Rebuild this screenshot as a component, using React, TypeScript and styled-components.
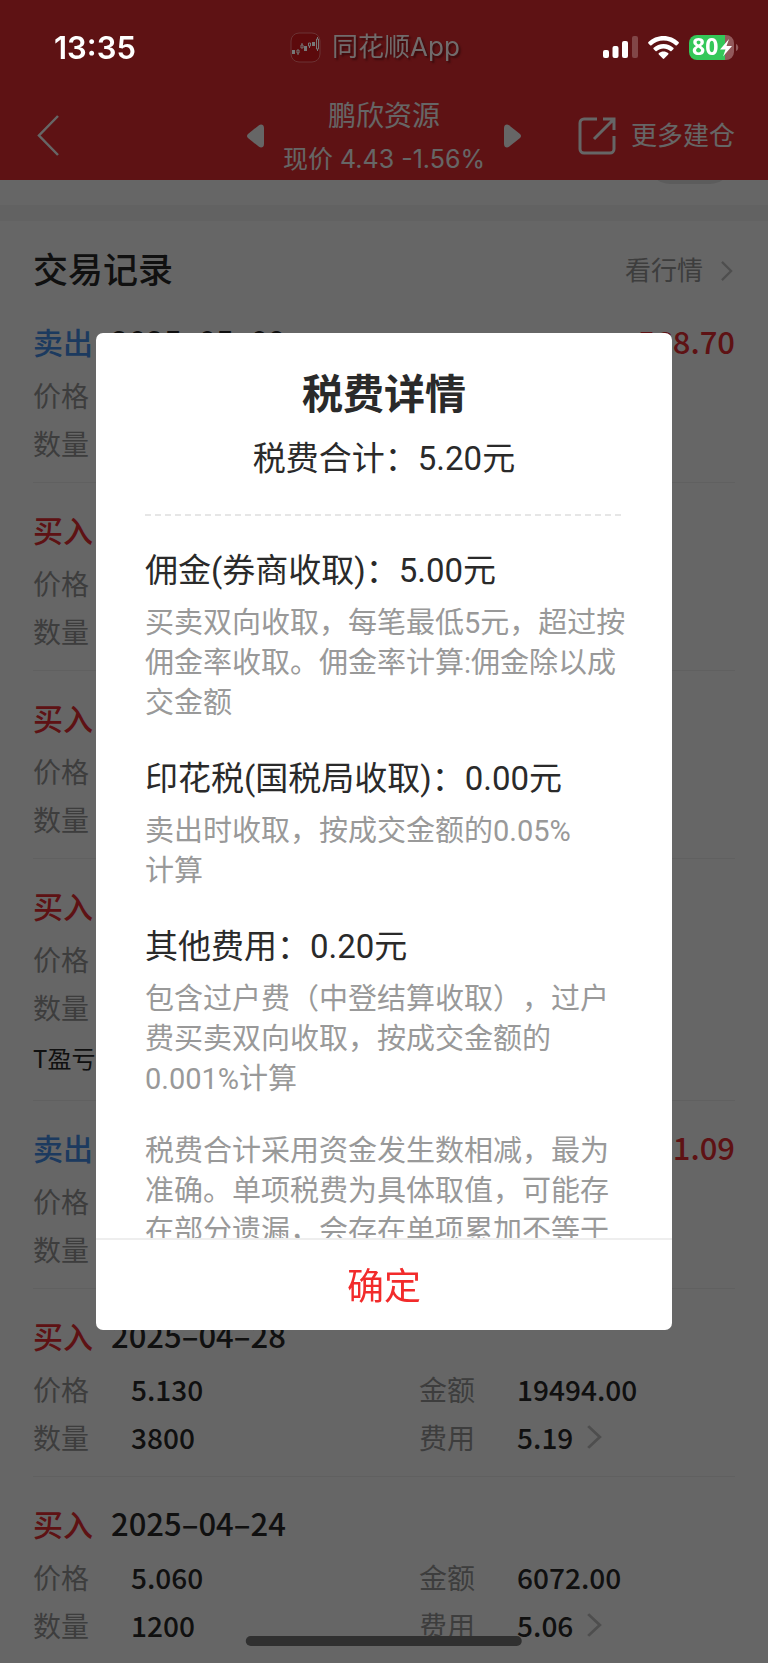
import React from 'react';
import styled, { createGlobalStyle } from 'styled-components';

const cjk = '"Noto Sans CJK SC", sans-serif';
const ink = '#2a2a2a';
const red = '#eb2d32';

const GlobalStyle = createGlobalStyle`
  * { box-sizing: border-box; }
  body {
    margin: 0;
    font-family: Inter, ${cjk};
    color: ${ink};
    text-spacing-trim: space-all;
  }
  h1, h2, h3, p, ul, dl, dd { margin: 0; padding: 0; font-weight: 400; }
  button { font: inherit; color: inherit; background: none; border: 0; padding: 0; }
  svg { display: block; flex: none; overflow: visible; }
`;

const Screen = styled.div`
  height: 100vh;
  display: flex;
  flex-direction: column;
  overflow: hidden;
  background: #fff;
`;

const Header = styled.header`
  flex: none;
  height: 180px;
  padding: 92px 33px 0;
  background: ${red};
  color: #fff;
  display: grid;
  grid-template-columns: 1fr 274px 1fr;
  align-items: center;
`;

const BackButton = styled.button`
  justify-self: start;
  padding-left: 4px;
`;

const StockSwitcher = styled.div`
  display: flex;
  align-items: center;
  justify-content: space-between;
`;

const Stock = styled.div`
  text-align: center;
  white-space: nowrap;
`;

const StockName = styled.h1`
  font-size: 28px;
  line-height: 46px;
`;

const StockPrice = styled.p`
  font-size: 25px;
  line-height: 40px;
`;

const MoreButton = styled.button`
  justify-self: end;
  display: flex;
  align-items: center;
  gap: 15px;
  font-size: 26px;
  line-height: 40px;
  white-space: nowrap;
`;

const Scroller = styled.main`
  flex: 1;
  min-height: 0;
  overflow: hidden;
`;

const PreviousPanel = styled.div`
  height: 25px;
  padding: 0 36px;
  overflow: hidden;
  display: flex;
  justify-content: flex-end;
`;

const PillButton = styled.button`
  width: 84px;
  height: 44px;
  margin-top: -40px;
  border-radius: 22px;
  background: #e6e6e6;
`;

const Divider = styled.div`
  height: 16px;
  background: #f5f5f5;
`;

const SectionHead = styled.div`
  display: flex;
  justify-content: space-between;
  align-items: center;
  padding: 25px 33px 0;
  line-height: 49px;
`;

const SectionTitle = styled.h2`
  font-size: 35px;
  font-weight: 500;
`;

const QuoteLink = styled.a`
  display: flex;
  align-items: center;
  gap: 18px;
  padding-right: 3px;
  font-size: 26px;
  color: #999;
  text-decoration: none;
`;

const RecordList = styled.ul`
  list-style: none;
  padding: 0 33px;
  font-family: ${cjk};
`;

const Record = styled.li`
  padding: 24px 0 15px;
  border-bottom: 1px solid #f0f0f0;
`;

const RecordHead = styled.div`
  display: flex;
  align-items: center;
  gap: 18px;
  margin-bottom: 8px;
  font-size: 31px;
  font-weight: 500;
  line-height: 44px;
`;

const Side = styled.span<{ $sell?: boolean }>`
  font-size: 30px;
  color: ${p => (p.$sell ? '#4691ee' : red)};
`;

const Profit = styled.span`
  margin-left: auto;
  color: ${red};
`;

const Fields = styled.dl`
  display: grid;
  grid-template-columns: 55% 45%;
`;

const Field = styled.div`
  display: grid;
  grid-template-columns: 98px 1fr;
  align-items: center;
  line-height: 48px;
  font-size: 28px;

  dt { color: #999; }
  dd {
    display: flex;
    align-items: center;
    gap: 14px;
    font-weight: 500;
  }
`;

const DayProfit = styled.p`
  font-size: 24px;
  line-height: 54px;
`;

const Overlay = styled.div`
  position: fixed;
  inset: 0;
  display: flex;
  align-items: center;
  justify-content: center;
  background: rgba(0, 0, 0, 0.6);
`;

const Dialog = styled.section`
  width: 75%;
  height: 60%;
  display: flex;
  flex-direction: column;
  border-radius: 7px;
  background: #fff;
  font-family: Roboto, ${cjk};
  overflow: hidden;
`;

const DialogBody = styled.div`
  flex: 1;
  min-height: 0;
  padding: 34px 49px 0;
  overflow: hidden;
`;

const DialogTitle = styled.h2`
  font-size: 41px;
  font-weight: 700;
  line-height: 56px;
  text-align: center;
`;

const Total = styled.p`
  margin-top: 12px;
  font-size: 33px;
  line-height: 48px;
  text-align: center;
`;

const Dashes = styled.div`
  height: 2px;
  margin: 31px 0;
  background: repeating-linear-gradient(to right, #e6e6e6 0 6px, transparent 6px 10px);
`;

const FeeItem = styled.div`
  margin-bottom: 32px;
`;

const FeeName = styled.h3`
  margin-bottom: 8px;
  font-size: 33px;
  line-height: 48px;
`;

const FeeNote = styled.p`
  font-size: 29px;
  line-height: 40px;
  color: #999;
  white-space: pre;
`;

const ConfirmButton = styled.button`
  flex: none;
  height: 92px;
  padding-bottom: 3px;
  border-top: 2px solid #eee;
  font-size: 37px;
  color: #f22b2b;
`;

const StatusBar = styled.div`
  position: fixed;
  top: 0;
  left: 0;
  right: 0;
  height: 94px;
  padding: 0 30px 0 12px;
  display: grid;
  grid-template-columns: 1fr auto 1fr;
  align-items: center;
  color: #fff;
`;

const Clock = styled.time`
  padding-left: 42px;
  font-size: 31px;
  font-weight: 600;
`;

const Brand = styled.div`
  display: flex;
  align-items: center;
  gap: 11px;
  font-size: 26px;
  line-height: 40px;
  color: #706c6c;
  text-shadow: 2px 2px 2px rgba(0, 0, 0, 0.4);
`;

const Indicators = styled.div`
  justify-self: end;
  display: flex;
  align-items: center;
  gap: 10px;
`;

const HomeIndicator = styled.div`
  position: fixed;
  bottom: 17px;
  left: 50%;
  width: 36%;
  height: 10px;
  transform: translateX(-50%);
  border-radius: 5px;
  background: #303030;
`;

function Chevron({ width, height }: { width: number; height: number }) {
  return (
    <svg width={width} height={height} viewBox="0 0 12 22" preserveAspectRatio="none" fill="none" stroke="#c4c4c4" strokeWidth="2.5">
      <path d="M1 1l10 10L1 21" />
    </svg>
  );
}

function Triangle({ right }: { right?: boolean }) {
  return (
    <svg width="17" height="24" viewBox="0 0 17 24" fill="#fff">
      <path
        transform={right ? 'matrix(-1 0 0 1 17 0)' : undefined}
        d="M1 10L12 1.2C14 -.2 17 .5 17 4V20C17 23.500 14 24.200 12 22.800L1 14Q-1 12 1 10Z"
      />
    </svg>
  );
}

type Trade = {
  sell?: boolean;
  date: string;
  price: string;
  amount: string;
  count: string;
  fee: string;
  profit?: string;
  dayProfit?: string;
};

const trades: Trade[] = [
  { sell: true, date: '2025–05–09', price: '4.980', amount: '9960.00', count: '2000', fee: '5.20', profit: '568.70' },
  { date: '2025–05–08', price: '4.690', amount: '9380.00', count: '2000', fee: '5.09' },
  { date: '2025–05–07', price: '4.720', amount: '9440.00', count: '2000', fee: '5.09' },
  { date: '2025–05–06', price: '4.750', amount: '9500.00', count: '2000', fee: '5.10', dayProfit: 'T盈亏' },
  { sell: true, date: '2025–04–29', price: '5.230', amount: '19874.00', count: '3800', fee: '14.94', profit: '361.09' },
  { date: '2025–04–28', price: '5.130', amount: '19494.00', count: '3800', fee: '5.19' },
  { date: '2025–04–24', price: '5.060', amount: '6072.00', count: '1200', fee: '5.06' },
];

const fees = [
  {
    name: '佣金(券商收取)：5.00元',
    note: '买卖双向收取，每笔最低5元，超过按\n佣金率收取。佣金率计算:佣金除以成\n交金额',
  },
  { name: '印花税(国税局收取)：0.00元', note: '卖出时收取，按成交金额的0.05%\n计算' },
  { name: '其他费用：0.20元', note: '包含过户费（中登结算收取），过户\n费买卖双向收取，按成交金额的\n0.001%计算' },
];

function TradeRecord({ trade }: { trade: Trade }) {
  return (
    <Record>
      <RecordHead>
        <Side $sell={trade.sell}>{trade.sell ? '卖出' : '买入'}</Side>
        <span>{trade.date}</span>
        {trade.profit && <Profit>{trade.profit}</Profit>}
      </RecordHead>
      <Fields>
        <Field><dt>价格</dt><dd>{trade.price}</dd></Field>
        <Field><dt>金额</dt><dd>{trade.amount}</dd></Field>
        <Field><dt>数量</dt><dd>{trade.count}</dd></Field>
        <Field><dt>费用</dt><dd>{trade.fee}<Chevron width={14} height={24} /></dd></Field>
      </Fields>
      {trade.dayProfit && <DayProfit>{trade.dayProfit}</DayProfit>}
    </Record>
  );
}

export default function App() {
  return (
    <>
      <GlobalStyle />
      <Screen>
        <Header>
          <BackButton aria-label="返回">
            <svg width="23" height="42" viewBox="0 0 23 42" fill="none" stroke="#fff" strokeWidth="2.5">
              <path d="M21 1L2 20.500l19 19.500" />
            </svg>
          </BackButton>
          <StockSwitcher>
            <button aria-label="上一只"><Triangle /></button>
            <Stock>
              <StockName>鹏欣资源</StockName>
              <StockPrice>现价 4.43 -1.56%</StockPrice>
            </Stock>
            <button aria-label="下一只"><Triangle right /></button>
          </StockSwitcher>
          <MoreButton>
            <svg width="38" height="38" viewBox="0 0 38 38" fill="none" stroke="#fff" strokeWidth="3">
              <path d="M19 2H6a4 4 0 0 0-4 4v26a4 4 0 0 0 4 4h26a4 4 0 0 0 4-4V19M25 2h11v11M36 2L16 22" />
            </svg>
            更多建仓
          </MoreButton>
        </Header>
        <Scroller>
          <PreviousPanel><PillButton aria-label="展开" /></PreviousPanel>
          <Divider />
          <SectionHead>
            <SectionTitle>交易记录</SectionTitle>
            <QuoteLink href="#quote">看行情<Chevron width={11} height={20} /></QuoteLink>
          </SectionHead>
          <RecordList>
            {trades.map(t => <TradeRecord key={t.date} trade={t} />)}
          </RecordList>
        </Scroller>
      </Screen>

      <Overlay>
        <Dialog role="dialog" aria-modal="true" aria-labelledby="fee-title">
          <DialogBody>
            <DialogTitle id="fee-title">税费详情</DialogTitle>
            <Total>税费合计：5.20元</Total>
            <Dashes />
            {fees.map(f => (
              <FeeItem key={f.name}>
                <FeeName>{f.name}</FeeName>
                <FeeNote>{f.note}</FeeNote>
              </FeeItem>
            ))}
            <FeeNote>{'税费合计采用资金发生数相减，最为\n准确。单项税费为具体取值，可能存\n在部分遗漏，会存在单项累加不等于'}</FeeNote>
          </DialogBody>
          <ConfirmButton>确定</ConfirmButton>
        </Dialog>
      </Overlay>

      <StatusBar>
        <Clock>13:35</Clock>
        <Brand>
          <svg width="31" height="31" viewBox="0 0 31 31" fill="none">
            <rect x="1" y="1" width="29" height="29" rx="8" fill="#5c0a0c" stroke="#6b3334" />
            <path d="M2 18h3v4H2zM14 14h3v5h-3zM22 10h3v4h-3z" fill="#777" />
            <path d="M7 18h2v3H7zM8 21v2M11 13h2v3h-2zM12 11v2M18.500 11h2v3h-2zM19.500 14v2M26.500 7h2v10h-2zM27.500 5v2M27.500 17v2" stroke="#777" />
          </svg>
          同花顺App
        </Brand>
        <Indicators>
          <svg width="35" height="22" viewBox="0 0 35 22" fill="#fff">
            <rect x="0" y="14" width="6" height="8" rx="2" />
            <rect x="9.500" y="10" width="6" height="12" rx="2" />
            <rect x="19" y="5" width="6" height="17" rx="2" />
            <rect x="29" y="0" width="6" height="22" rx="2" opacity=".22" />
          </svg>
          <svg width="31" height="23" viewBox="0 0 31 23" fill="#fff">
            <path d="M15.500 0C21.500 0 26.700 2.300 30.600 6c.5.500.5 1 0 1.500l-1.700 1.700c-.4.400-1 .4-1.400 0C24.300 6.300 20.200 4.500 15.500 4.500S6.700 6.300 3.500 9.200c-.4.400-1 .4-1.400 0L.4 7.500C0 7 0 6.500.4 6 4.300 2.300 9.500 0 15.500 0Z" />
            <path d="M15.500 8c3.800 0 7.200 1.400 9.800 3.700.5.400.5 1 0 1.500l-1.800 1.700c-.4.400-.9.400-1.300 0-1.800-1.500-4.100-2.500-6.700-2.500s-4.900 1-6.700 2.500c-.4.400-.9.400-1.300 0l-1.800-1.700c-.5-.5-.5-1.100 0-1.500C8.300 9.400 11.700 8 15.500 8Z" />
            <path d="M15.500 15.500c1.800 0 3.400.6 4.600 1.600.5.400.5 1 .1 1.500l-4 4c-.4.400-1 .4-1.400 0l-4-4c-.4-.5-.4-1.100.1-1.500 1.200-1 2.800-1.600 4.600-1.600Z" />
          </svg>
          <svg width="49" height="25" viewBox="0 0 49 25">
            <path d="M8 0h29a8 8 0 0 1 8 8v9a8 8 0 0 1-8 8h-1V0Z" fill="#92595b" />
            <path d="M8 0h28v25H8a8 8 0 0 1-8-8V8a8 8 0 0 1 8-8Z" fill="#34c759" />
            <path d="M47 9c3 1 3 6 0 7Z" fill="#92595b" />
            <text x="3" y="20" fill="#fff" fontFamily="Open Sans, sans-serif" fontWeight="700" fontSize="23">80</text>
            <path d="M40 4L31 14.500h5.500L34 21.500 43 11h-5.500Z" fill="#fff" />
          </svg>
        </Indicators>
      </StatusBar>
      <HomeIndicator />
    </>
  );
}
